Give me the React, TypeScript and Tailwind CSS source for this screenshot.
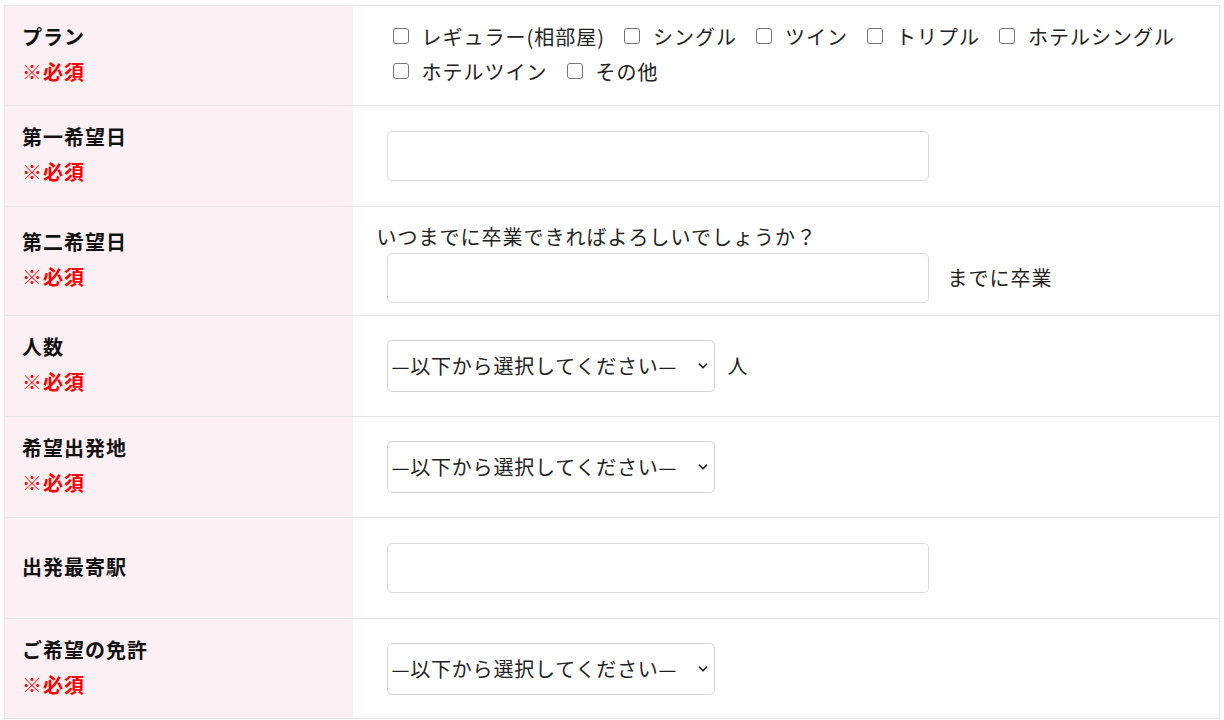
import { ChevronDown } from "lucide-react";

const plans = [
  "レギュラー(相部屋)",
  "シングル",
  "ツイン",
  "トリプル",
  "ホテルシングル",
  "ホテルツイン",
  "その他",
];

function Label({
  title,
  required,
  tall = true,
}: {
  title: string;
  required?: boolean;
  tall?: boolean;
}) {
  return (
    <th
      className={`w-[348px] bg-[#fdf0f4] border border-r-0 border-[#e6e6e6] text-left align-middle pl-[17px] pr-4 pt-[11px] pb-[15px] font-bold text-[20px] leading-[35px] tracking-[0.05em] text-[#111] ${
        tall ? "h-[101px]" : "h-[100px]"
      }`}
    >
      <div>{title}</div>
      {required && <div className="text-[#ff0000]">※必須</div>}
    </th>
  );
}

function Select() {
  return (
    <div className="relative ml-[10px] w-[328px] h-[52px]">
      <select
        defaultValue=""
        className="appearance-none w-full h-full border border-[#d4d4d4] rounded-[5px] bg-white pl-[4px] pr-8 text-[20px] tracking-[0.04em] text-[#222] outline-none"
      >
        <option value="">—以下から選択してください—</option>
      </select>
      <ChevronDown
        className="absolute right-[5px] top-1/2 -translate-y-1/2 w-[14px] h-[14px] text-[#222] pointer-events-none"
        strokeWidth={3}
      />
    </div>
  );
}

function TextInput() {
  return (
    <input
      type="text"
      className="ml-[10px] w-[542px] h-[50px] border border-[#d9d9d9] rounded-[5px] bg-white outline-none px-2 text-[20px]"
    />
  );
}

const cell =
  "border border-l-0 border-[#e6e6e6] pl-6 pr-4 py-[13px] align-middle";

export default function App() {
  return (
    <div className="bg-white min-h-[720px] pt-[5px] pl-[4px] font-['Noto_Sans_CJK_JP','Noto_Sans',sans-serif] text-[#222]">
      <table className="border-collapse w-[1216px]">
        <tbody>
          <tr>
            <Label title="プラン" required tall={false} />
            <td className="border border-l-0 border-[#e6e6e6] pl-6 pr-4 pt-[11px] pb-[15px] align-middle">
              <div className="flex flex-wrap gap-x-[13px] pl-[10px] text-[20px] leading-[35px] tracking-[0.05em]">
                {plans.map((p) => (
                  <label key={p} className="flex items-center">
                    <input
                      type="checkbox"
                      className="appearance-none ml-[6px] mr-[13px] w-[16px] h-[16px] border-[1.5px] border-[#767676] rounded-[3px] bg-white"
                    />
                    <span>{p}</span>
                  </label>
                ))}
              </div>
            </td>
          </tr>
          <tr>
            <Label title="第一希望日" required />
            <td className={cell}>
              <TextInput />
            </td>
          </tr>
          <tr>
            <Label title="第二希望日" required />
            <td className="border border-l-0 border-[#e6e6e6] pl-6 pr-4 pt-[13px] pb-[12px] align-middle">
              <div className="text-[20px] leading-[33px] tracking-[0.05em]">
                いつまでに卒業できればよろしいでしょうか？
              </div>
              <div className="flex items-center">
                <TextInput />
                <span className="ml-[19px] text-[20px] tracking-[0.05em]">
                  までに卒業
                </span>
              </div>
            </td>
          </tr>
          <tr>
            <Label title="人数" required />
            <td className={cell}>
              <div className="flex items-center">
                <Select />
                <span className="ml-[13px] text-[20px]">人</span>
              </div>
            </td>
          </tr>
          <tr>
            <Label title="希望出発地" required />
            <td className={cell}>
              <Select />
            </td>
          </tr>
          <tr>
            <Label title="出発最寄駅" />
            <td className={cell}>
              <TextInput />
            </td>
          </tr>
          <tr>
            <Label title="ご希望の免許" required tall={false} />
            <td className={cell}>
              <Select />
            </td>
          </tr>
        </tbody>
      </table>
    </div>
  );
}
